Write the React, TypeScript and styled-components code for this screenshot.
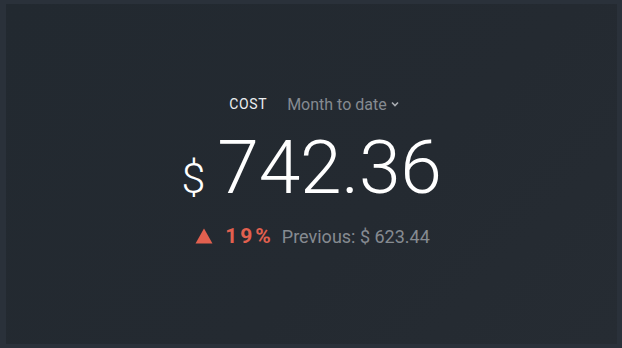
import { createGlobalStyle, styled } from 'styled-components';

const GlobalStyle = createGlobalStyle`
  html, body {
    margin: 0;
    padding: 0;
    background: #2a313a;
  }
  body {
    font-family: Roboto, "Liberation Sans", sans-serif;
  }
`;

const Frame = styled.div`
  width: 622px;
  height: 348px;
  box-sizing: border-box;
  padding: 4px 5px 4px 6px;
  display: flex;
`;

const Card = styled.div`
  flex: 1;
  background: linear-gradient(135deg, #222930 0%, #242a31 60%, #262c33 100%);
  display: flex;
  flex-direction: column;
  align-items: center;
  padding-top: 88px;
  box-sizing: border-box;
`;

const Header = styled.div`
  display: flex;
  align-items: center;
  gap: 20px;
  height: 24px;
  margin-left: 6px;
`;

const Label = styled.span`
  color: #eceef0;
  font-size: 14px;
  font-weight: 400;
  letter-spacing: 0.6px;
`;

const Period = styled.span`
  display: flex;
  align-items: center;
  gap: 3px;
  color: #868b91;
  font-size: 16px;
`;

const Amount = styled.div`
  display: flex;
  align-items: baseline;
  color: #ffffff;
  font-weight: 300;
  margin-top: 7px;
  height: 88px;
`;

const Currency = styled.span`
  font-size: 43px;
  margin-right: 12px;
`;

const Value = styled.span`
  font-size: 75px;
  letter-spacing: -0.3px;
`;

const Change = styled.div`
  display: flex;
  align-items: center;
  margin-top: 12px;
  height: 26px;
  margin-left: 2px;
`;

const Delta = styled.span<{ $color: string }>`
  display: flex;
  align-items: center;
  gap: 12px;
  color: ${p => p.$color};
  font-size: 21px;
  font-weight: 700;
  letter-spacing: 3px;
  margin-right: 8px;
`;

const Previous = styled.span`
  color: #868b91;
  font-size: 18px;
`;

const Chevron = () => (
  <svg width="10" height="10" viewBox="0 0 10 10">
    <path d="M2 3.5 L5 6.5 L8 3.5" fill="none" stroke="#a9adb2" strokeWidth="1.6" />
  </svg>
);

const TriangleUp = ({ color }: { color: string }) => (
  <svg width="18" height="16" viewBox="0 0 18 16">
    <path d="M9 0.5 L17.5 15.5 L0.5 15.5 Z" fill={color} />
  </svg>
);

export default function App() {
  const red = '#e2604f';
  return (
    <>
      <GlobalStyle />
      <Frame>
        <Card>
          <Header>
            <Label>COST</Label>
            <Period>
              Month to date
              <Chevron />
            </Period>
          </Header>
          <Amount>
            <Currency>$</Currency>
            <Value>742.36</Value>
          </Amount>
          <Change>
            <Delta $color={red}>
              <TriangleUp color={red} />
              19%
            </Delta>
            <Previous>Previous: $ 623.44</Previous>
          </Change>
        </Card>
      </Frame>
    </>
  );
}
